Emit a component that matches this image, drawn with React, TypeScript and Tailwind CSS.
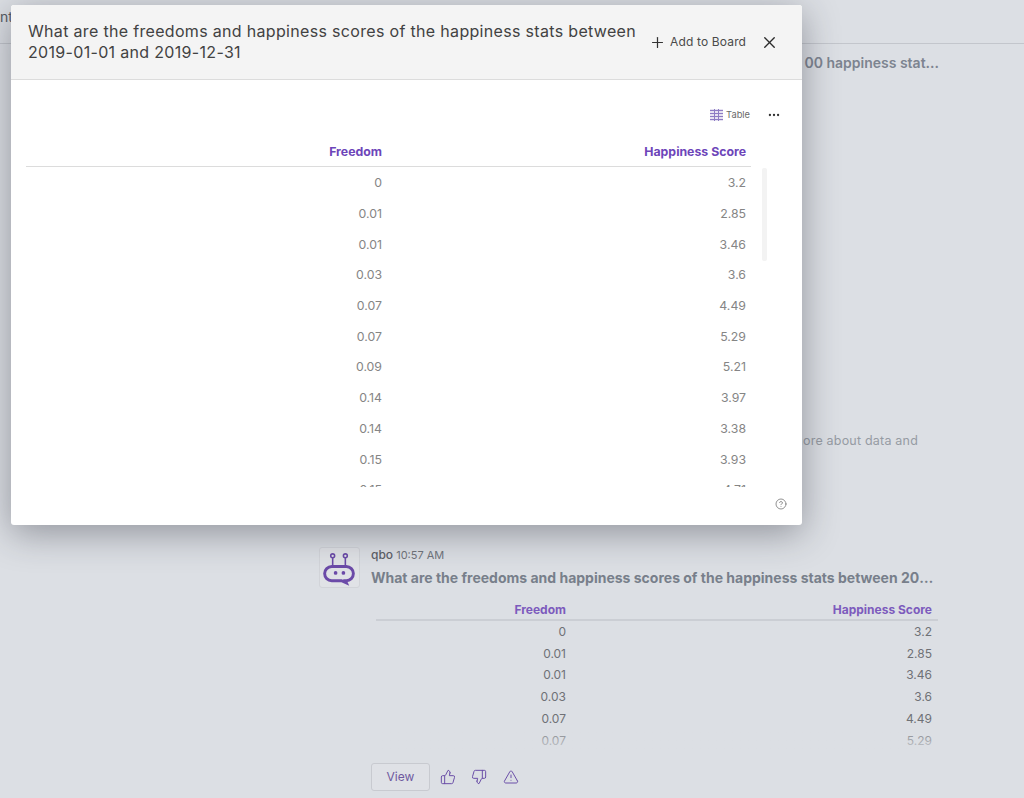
import { CircleHelp, Ellipsis, Plus, ThumbsDown, ThumbsUp, TriangleAlert, X } from "lucide-react";

const modalRows = [
    ["0", "3.2"],
    ["0.01", "2.85"],
    ["0.01", "3.46"],
    ["0.03", "3.6"],
    ["0.07", "4.49"],
    ["0.07", "5.29"],
    ["0.09", "5.21"],
    ["0.14", "3.97"],
    ["0.14", "3.38"],
    ["0.15", "3.93"],
    ["0.15", "4.71"],
];

const chatRows = [
    ["0", "3.2"],
    ["0.01", "2.85"],
    ["0.01", "3.46"],
    ["0.03", "3.6"],
    ["0.07", "4.49"],
    ["0.07", "5.29"],
];

const QboLogo = () => (
    <svg viewBox="0 0 40 40" className="h-[40px] w-[40px]" fill="none" stroke="#6b4aa8" strokeWidth="1.6">
        <circle cx="13" cy="7.5" r="2" />
        <circle cx="26" cy="7.5" r="2" />
        <path d="M13 9.5v8M26 9.5v8" />
        <path d="M12 18.5h15a7 7 0 0 1 0 14.5h-1l1 2.2-5-2.2H12a7 7 0 0 1 0-14.5z" strokeWidth="3" />
        <circle cx="16" cy="25" r="1.9" fill="#6b4aa8" stroke="none" />
        <circle cx="24" cy="25" r="1.9" fill="#6b4aa8" stroke="none" />
    </svg>
);

const TableIcon = () => (
    <svg viewBox="0 0 13 12" className="h-[12px] w-[13px]" stroke="#8d7cc4" strokeWidth="1" fill="#e6e2f2">
        <rect x="0" y="0" width="13" height="12" stroke="none" />
        <path d="M0 1.5h13M0 4.5h13M0 7.5h13M0 10.5h13M4.5 0v12M8.5 0v12" fill="none" />
    </svg>
);

const ChatBackground = () => (
    <div className="flex h-[798px] flex-col overflow-hidden bg-[#dcdfe4]">
        <div className="h-[44px] shrink-0 border-b border-[#c3c6cc] pt-[6px] text-[14px] text-[#555a62]">
            nt
        </div>
        <div className="ml-[319px] flex w-[620px] flex-col">
            <p className="mt-[9px] h-[20px] truncate text-right text-[14px] leading-[20px] font-semibold text-[#7d8490]">
                00 happiness stat...
            </p>
            <p className="mt-[358px] h-[20px] pr-[21px] text-right text-[12.5px] leading-[20px] tracking-[0.2px] text-[#969ba3]">
                more about data and
            </p>
            <div className="mt-[96px] flex gap-[11px]">
                <div className="flex h-[41px] w-[41px] shrink-0 items-center justify-center rounded-[3px] border border-[#d2d4d9] bg-[#e0e2e6]">
                    <QboLogo />
                </div>
                <div className="min-w-0 flex-1">
                    <p className="text-[11px] leading-[16px] text-[#70747b]">
                        <span className="text-[12px] font-medium text-[#5c6067]">qbo</span> 10:57 AM
                    </p>
                    <p className="mt-[5px] truncate text-[14px] leading-[20px] font-bold text-[#787f8b]">
                        What are the freedoms and happiness scores of the happiness stats between 2019-01-01
                    </p>
                    <div className="relative mt-[12px] ml-[5px] w-[562px]">
                        <div className="flex h-[21px] items-center border-b-2 border-[#cbced4] text-[12px] font-bold text-[#7c5bbd]">
                            <span className="w-[190px] text-right">Freedom</span>
                            <span className="flex-1 pr-[6px] text-right">Happiness Score</span>
                        </div>
                        {chatRows.map(([freedom, score], i) => (
                            <div
                                key={i}
                                className="flex h-[21.8px] items-center text-[12px] text-[#6f7176]"
                            >
                                <span className="w-[190px] text-right">{freedom}</span>
                                <span className="flex-1 pr-[6px] text-right">{score}</span>
                            </div>
                        ))}
                        <div className="absolute inset-x-0 bottom-0 h-[24px] bg-gradient-to-b from-[#dcdfe4]/10 to-[#dcdfe4]/90" />
                    </div>
                    <div className="mt-[11px] flex items-center">
                        <button
                            type="button"
                            className="h-[28px] w-[59px] rounded-[3px] border border-[#c8cad0] bg-[#dfe1e6] text-[12px] text-[#6f5aa0]"
                        >
                            View
                        </button>
                        <ThumbsUp className="ml-[10px] h-[16px] w-[16px] text-[#6b4fa8]" strokeWidth={1.5} />
                        <ThumbsDown className="ml-[15px] h-[16px] w-[16px] text-[#6b4fa8]" strokeWidth={1.5} />
                        <TriangleAlert className="ml-[16px] h-[16px] w-[16px] text-[#6b4fa8]" strokeWidth={1.5} />
                    </div>
                </div>
            </div>
        </div>
    </div>
);

const ResultModal = () => (
    <div className="absolute top-[5px] left-[11px] flex h-[520px] w-[791px] flex-col overflow-hidden rounded-[3px] bg-white shadow-[0_8px_36px_rgba(40,44,55,0.42)]">
        <div className="flex h-[75px] shrink-0 items-center border-b border-[#dcdcdc] bg-[#f4f4f4] pl-[17px]">
            <h2 className="w-[615px] text-[16px] leading-[21px] tracking-[0.32px] text-[#424242]">
                What are the freedoms and happiness scores of the happiness stats between 2019-01-01 and 2019-12-31
            </h2>
            <button type="button" className="ml-[6px] flex items-center gap-[4px] text-[12px] tracking-[0.15px] text-[#4a4a4a]">
                <Plus className="h-[17px] w-[17px] text-[#333333]" strokeWidth={1.75} />
                Add to Board
            </button>
            <X className="ml-[14px] h-[19px] w-[19px] text-[#2b2b2b]" strokeWidth={1.75} />
        </div>
        <div className="flex h-[64px] shrink-0 items-center justify-end pt-[5px] pr-[21px]">
            <TableIcon />
            <span className="ml-[3px] text-[9.3px] text-[#6a6a6a]">Table</span>
            <Ellipsis className="ml-[17px] h-[14px] w-[14px] text-[#333333]" strokeWidth={2} />
        </div>
        <div className="relative ml-[15px] flex w-[725px] grow flex-col">
            <div className="flex h-[17px] shrink-0 items-center text-[12.3px] font-bold text-[#6d45b9]">
                <span className="w-[356px] text-right">Freedom</span>
                <span className="flex-1 pr-[5px] text-right">Happiness Score</span>
            </div>
            <div className="mt-[5px] h-[321px] overflow-hidden border-t border-[#dcdcdc] pt-[1px]">
                {modalRows.map(([freedom, score], i) => (
                    <div
                        key={i}
                        className="flex h-[30.72px] items-center text-[12.3px] text-[#858585]"
                    >
                        <span className="w-[356px] text-right">{freedom}</span>
                        <span className="flex-1 pr-[5px] text-right">{score}</span>
                    </div>
                ))}
            </div>
            <div className="absolute top-[24px] right-[-16px] h-[93px] w-[5px] rounded-[2px] bg-[#f3f3f3]" />
        </div>
        <div className="flex h-[38px] shrink-0 items-start justify-end pt-[11px] pr-[15px]">
            <CircleHelp className="h-[12px] w-[12px] text-[#6e6e6e]" strokeWidth={1.5} />
        </div>
    </div>
);

const App = () => {
    return (
        <div className="relative h-[798px] w-[1024px] overflow-hidden font-['Inter',sans-serif]">
            <ChatBackground />
            <ResultModal />
        </div>
    );
};

export default App;
